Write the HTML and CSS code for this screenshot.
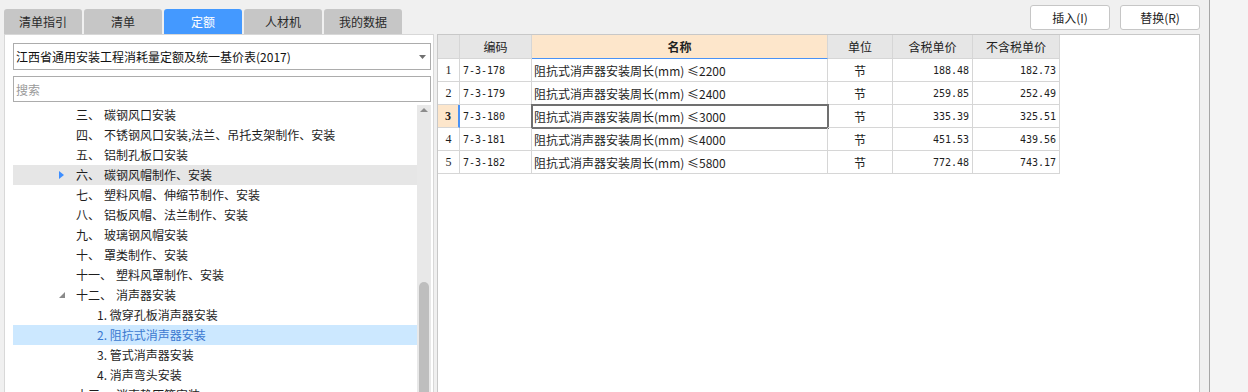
FILE: index.html
```html
<!DOCTYPE html>
<html>
<head>
  <title>定额</title>
  <meta charset="UTF-8">
  <link rel="stylesheet" href="styles.css">
</head>

<body>
  <div class="app">

    <div class="side">
      <div class="tabs">
        <div class="tab">清单指引</div>
        <div class="tab">清单</div>
        <div class="tab active">定额</div>
        <div class="tab">人材机</div>
        <div class="tab">我的数据</div>
      </div>

      <div class="panel">
        <div class="combo">
          <span>江西省通用安装工程消耗量定额及统一基价表(2017)</span>
          <svg class="comboArrow" width="7" height="4" viewBox="0 0 7 4"><path d="M0 0H7L3.5 4Z" fill="#707070"/></svg>
        </div>
        <div class="search">搜索</div>

        <div class="tree">
          <div class="treeList">
            <div class="node"><span class="twisty"></span><span class="num">三、</span><span class="title">碳钢风口安装</span></div>
            <div class="node"><span class="twisty"></span><span class="num">四、</span><span class="title">不锈钢风口安装,法兰、吊托支架制作、安装</span></div>
            <div class="node"><span class="twisty"></span><span class="num">五、</span><span class="title">铝制孔板口安装</span></div>
            <div class="node hover"><span class="twisty"><svg width="5" height="8" viewBox="0 0 5 8"><path d="M0 0L5 4L0 8Z" fill="#3d8eff"/></svg></span><span class="num">六、</span><span class="title">碳钢风帽制作、安装</span></div>
            <div class="node"><span class="twisty"></span><span class="num">七、</span><span class="title">塑料风帽、伸缩节制作、安装</span></div>
            <div class="node"><span class="twisty"></span><span class="num">八、</span><span class="title">铝板风帽、法兰制作、安装</span></div>
            <div class="node"><span class="twisty"></span><span class="num">九、</span><span class="title">玻璃钢风帽安装</span></div>
            <div class="node"><span class="twisty"></span><span class="num">十、</span><span class="title">罩类制作、安装</span></div>
            <div class="node"><span class="twisty"></span><span class="num">十一、</span><span class="title">塑料风罩制作、安装</span></div>
            <div class="node"><span class="twisty"><svg width="6" height="6" viewBox="0 0 6 6"><path d="M6 0V6H0Z" fill="#8a8a8a"/></svg></span><span class="num">十二、</span><span class="title">消声器安装</span></div>
            <div class="node child"><span class="twisty"></span><span>1. 微穿孔板消声器安装</span></div>
            <div class="node child selected"><span class="twisty"></span><span>2. 阻抗式消声器安装</span></div>
            <div class="node child"><span class="twisty"></span><span>3. 管式消声器安装</span></div>
            <div class="node child"><span class="twisty"></span><span>4. 消声弯头安装</span></div>
            <div class="node"><span class="twisty"></span><span class="num">十三、</span><span class="title">消声静压箱安装</span></div>
          </div>
          <div class="scrollbar">
            <svg class="scrollUp" width="8" height="4" viewBox="0 0 8 4"><path d="M0 4L4 0L8 4Z" fill="#8c8c8c"/></svg>
            <div class="thumb"></div>
          </div>
        </div>
      </div>
    </div>

    <div class="main">
      <div class="toolbar">
        <button class="btn">插入(I)</button>
        <button class="btn">替换(R)</button>
      </div>
      <div class="gridWrap">
        <div class="sheet">
          <div class="cell head"></div>
          <div class="cell head">编码</div>
          <div class="cell head nameHead">名称</div>
          <div class="cell head">单位</div>
          <div class="cell head">含税单价</div>
          <div class="cell head">不含税单价</div>

          <div class="cell rowNo">1</div>
          <div class="cell code">7-3-178</div>
          <div class="cell name">阻抗式消声器安装周长(mm) ≤2200</div>
          <div class="cell unit">节</div>
          <div class="cell price">188.48</div>
          <div class="cell price">182.73</div>

          <div class="cell rowNo">2</div>
          <div class="cell code">7-3-179</div>
          <div class="cell name">阻抗式消声器安装周长(mm) ≤2400</div>
          <div class="cell unit">节</div>
          <div class="cell price">259.85</div>
          <div class="cell price">252.49</div>

          <div class="cell rowNo current">3</div>
          <div class="cell code">7-3-180</div>
          <div class="cell name focus">阻抗式消声器安装周长(mm) ≤3000</div>
          <div class="cell unit">节</div>
          <div class="cell price">335.39</div>
          <div class="cell price">325.51</div>

          <div class="cell rowNo">4</div>
          <div class="cell code">7-3-181</div>
          <div class="cell name">阻抗式消声器安装周长(mm) ≤4000</div>
          <div class="cell unit">节</div>
          <div class="cell price">451.53</div>
          <div class="cell price">439.56</div>

          <div class="cell rowNo">5</div>
          <div class="cell code">7-3-182</div>
          <div class="cell name">阻抗式消声器安装周长(mm) ≤5800</div>
          <div class="cell unit">节</div>
          <div class="cell price">772.48</div>
          <div class="cell price">743.17</div>
        </div>
      </div>
    </div>

    <div class="rest"></div>
  </div>
</body>

</html>
```

FILE: styles.css
```css
body {
  margin: 0;
  background: #f0f0f0;
  font-family: "Noto Sans CJK SC", "Noto Sans", sans-serif;
  font-size: 12px;
  color: #1e1e1e;
}
.app {
  display: flex;
  height: 392px;
  overflow: hidden;
}

/* left side: tabs + tree */
.side {
  width: 430px;
  margin-left: 4px;
  display: flex;
  flex-direction: column;
}
.tabs {
  display: flex;
  gap: 2px;
  padding-top: 9px;
  height: 25px;
}
.tab {
  width: 78px;
  background: #c6c6c6;
  border-radius: 3px 3px 0 0;
  text-align: center;
  line-height: 25px;
  color: #2a2a2a;
}
.tab.active {
  background: #4499ff;
  color: #fff;
}
.panel {
  flex: 1;
  min-height: 0;
  background: #fff;
  border: 1px solid #d8d8d8;
  border-bottom: 0;
  padding: 8px 2px 0 8px;
  display: flex;
  flex-direction: column;
}
.combo, .search {
  box-sizing: border-box;
  border: 1px solid #acacac;
  padding-left: 2px;
  display: flex;
  align-items: center;
}
.combo {
  height: 27px;
  color: #111;
}
.comboArrow {
  margin-left: auto;
  margin-right: 4px;
}
.search {
  height: 26px;
  margin-top: 6px;
  color: #9a9a9a;
}
.tree {
  flex: 1;
  min-height: 0;
  margin-top: 3px;
  display: flex;
}
.treeList {
  width: 404px;
}
.node {
  height: 20px;
  line-height: 20px;
  padding-left: 45px;
  display: flex;
  align-items: center;
  white-space: nowrap;
}
.node.child {
  padding-left: 66px;
}
.node.hover {
  background: #e6e6e6;
}
.node.selected {
  background: #cce8ff;
  color: #3a78d0;
}
.twisty {
  width: 18px;
  height: 20px;
  display: flex;
  align-items: center;
  padding-left: 1px;
  box-sizing: border-box;
}
.title {
  margin-left: 4px;
}
.scrollbar {
  width: 14px;
  background: #e8e8e8;
  position: relative;
}
.scrollUp {
  display: block;
  margin: 3px auto 0;
}
.thumb {
  position: absolute;
  left: 2px;
  width: 10px;
  top: 177px;
  bottom: -20px;
  background: #bebebe;
  border-radius: 5px;
}

/* right side: buttons + grid */
.main {
  width: 763px;
  margin-left: 3px;
  display: flex;
  flex-direction: column;
}
.toolbar {
  height: 34px;
  box-sizing: border-box;
  padding-top: 5px;
  display: flex;
  justify-content: flex-end;
  gap: 10px;
}
.btn {
  width: 80px;
  height: 25px;
  background: #fff;
  border: 1px solid #c6c6c6;
  border-radius: 3px;
  font-family: inherit;
  font-size: 12px;
  color: #222;
  padding: 0;
}
.gridWrap {
  flex: 1;
  background: #fff;
  border: 1px solid #c8c8c8;
  border-bottom: 0;
}
.sheet {
  display: grid;
  grid-template-columns: 22px 72px 296px 65px 80px 87px;
  grid-template-rows: 24px;
  grid-auto-rows: 23px;
  width: 622px;
}
.cell {
  box-sizing: border-box;
  border-right: 1px solid #d6d6d6;
  border-bottom: 1px solid #d6d6d6;
  display: flex;
  align-items: center;
  white-space: nowrap;
  overflow: hidden;
}
.head {
  background: #e6e6e6;
  justify-content: center;
  color: #222;
}
.nameHead {
  background: #fde6cb;
  font-weight: bold;
  border-bottom-color: #4a92f5;
}
.rowNo {
  justify-content: center;
  font-family: "Liberation Serif", serif;
  font-size: 12px;
}
.rowNo.current {
  background: #fde6cb;
  font-weight: bold;
  border-right: 2px solid #4a92f5;
}
.code {
  padding-left: 3px;
  font-family: "DejaVu Sans Mono", monospace;
  font-size: 10px;
}
.name {
  padding-left: 2px;
}
.name.focus {
  outline: 2px solid #707070;
  outline-offset: -1px;
}
.unit {
  justify-content: center;
}
.price {
  justify-content: flex-end;
  padding-right: 3px;
  font-family: "DejaVu Sans Mono", monospace;
  font-size: 10px;
}

.rest {
  flex: 1;
  margin-left: 9px;
  border-left: 1px solid #a6a6a6;
  background: #f4f4f4;
}
```
